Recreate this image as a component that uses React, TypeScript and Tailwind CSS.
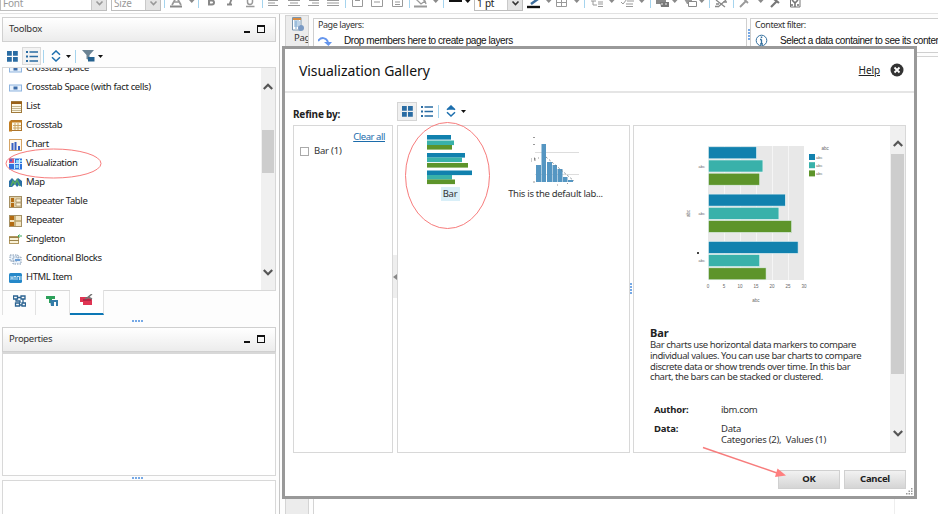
import type { ReactNode } from "react";

const UI = "font-['Noto_Sans',sans-serif]";

/* ---------- main toolbar ---------- */

function Cell({ w, children }: { w: number; children?: ReactNode }) {
  return (
    <svg width={w} height={13} viewBox={`0 0 ${w} 13`} className="block shrink-0" fill="none">
      {children}
    </svg>
  );
}
const Sep = ({ w }: { w: number }) => (
  <Cell w={w}>
    <path d="M.5 0V8" stroke="#a5d4ee" />
  </Cell>
);
const Caret = ({ w, dark = false }: { w: number; dark?: boolean }) => (
  <Cell w={w}>
    <path d="M0 0h5.500L2.750 3z" fill={dark ? "#111" : "#8a8a8a"} />
  </Cell>
);

function Combo({ text, w, dark = false, h = "h-[11px]" }: { text: string; w: string; dark?: boolean; h?: string }) {
  return (
    <div className={`flex shrink-0 overflow-hidden border border-t-0 border-[#bdbdbd] bg-white ${w} ${h}`}>
      <span className={`-mt-[3px] flex-1 pl-[2px] text-[10px] leading-[12px] tracking-[-0.2px] ${dark ? "text-[#222]" : "text-[#999]"}`}>{text}</span>
      <span className="flex w-[15px] justify-center border-l border-[#c9c9c9] bg-[#e4e4e4]">
        <svg width="9" height="8" viewBox="0 0 9 8" fill="none">
          <path d="M1.500 1.500 4.500 4.500 7.500 1.500" stroke={dark ? "#333" : "#999"} strokeWidth="1.600" />
        </svg>
      </span>
    </div>
  );
}

function TopBar() {
  const g = "#999";
  return (
    <div className="flex h-[14px] shrink-0 items-start overflow-hidden border-b border-[#e2e2e2] bg-white">
      <Combo text="Font" w="w-[107px]" />
      <div className="w-[4px]" />
      <Combo text="Size" w="w-[50px]" />
      <div className="w-[3px]" />
      <Sep w={6} />
      <Cell w={19}>
        <path d="M2 5 6.500-3 11 5M3.500 2h6" stroke={g} strokeWidth="1.700" />
        <path d="M0 6.500h12" stroke="#888" strokeWidth="2" />
      </Cell>
      <Caret w={9} />
      <Sep w={9} />
      <Cell w={20}>
        <path d="M1 4.500h4a1.500 1.500 0 0 0 0-4H2v4M2 0v-4" stroke="#888" strokeWidth="2" />
      </Cell>
      <Cell w={19}>
        <path d="M0 4.500h5M2.500 4.500 5-2" stroke="#888" strokeWidth="1.800" />
      </Cell>
      <Cell w={16}>
        <path d="M1.500-2v4a2.500 2.500 0 0 0 5 0v-4M0 6.500h8.500" stroke={g} strokeWidth="1.500" />
      </Cell>
      <Sep w={6} />
      <Cell w={20}><path d="M0 .5h10M0 3h7M0 5.500h10" stroke={g} /></Cell>
      <Cell w={19}><path d="M0 .5h12M2 3h8M0 5.500h12" stroke={g} /></Cell>
      <Cell w={20}><path d="M2 .5h10M5 3h7M1 5.500h11" stroke={g} /></Cell>
      <Cell w={18}><path d="M0 .5h12M0 3h12M0 5.500h12" stroke={g} /></Cell>
      <Sep w={7} />
      <Cell w={19}><path d="M.5-1v7.500h10V-1M3 .5h5" stroke={g} /></Cell>
      <Cell w={21}><path d="M.5-1v7.500h11V-1M3 2h6" stroke={g} /></Cell>
      <Cell w={17}><path d="M.5-1v7.500h10V-1M3 2h5M3 4.500h5" stroke={g} /></Cell>
      <Sep w={5} />
      <Cell w={19}>
        <path d="m3 0 4 4 4-3-4-3zM11 1l1 3" stroke={g} strokeWidth="1.300" />
        <path d="M0 6.500h13" stroke={g} strokeWidth="2" />
      </Cell>
      <Caret w={10} />
      <Sep w={6} />
      <Cell w={16}><path d="M0 1h13" stroke="#111" strokeWidth="2" /></Cell>
      <Caret w={9} dark />
      <Combo text="1 pt" w="w-[49px]" dark />
      <div className="w-[4px]" />
      <Cell w={19}>
        <path d="M4 4 11-1" stroke="#3c6c9b" strokeWidth="2.500" />
        <path d="M0 7h13" stroke="#111" strokeWidth="2.400" />
      </Cell>
      <Caret w={10} />
      <Cell w={18}><path d="M.5-1v7.500h10V-1M5.500 0v6M0 2.500h11" stroke={g} /></Cell>
      <Caret w={10} />
      <Sep w={6} />
      <Cell w={19}><path d="M1 1h5M3 1v4h4M8 2h5M8 4h5M8 6.500h5" stroke={g} /></Cell>
      <Caret w={12} />
      <Cell w={18}><path d="m0 2 2 2 4-5M6 1h7M5 4h7M5 6.500h7" stroke={g} /></Cell>
      <Caret w={11} />
      <Sep w={6} />
      <Cell w={16}>
        <path d="M0 0h10v4H0z" fill="#888" />
        <path d="M4 2h9v5H5z" fill="#777" /><path d="M5 4h2M9 4h2" stroke="#eee" />
      </Cell>
      <Caret w={12} />
      <Cell w={15}>
        <path d="M0-1h8v5H3z" fill="#999" /><path d="M4.500 1.500h8v5h-8z" fill="#fff" stroke="#888" />
      </Cell>
      <Caret w={10} />
      <Sep w={6} />
      <Cell w={18}><path d="M1 0 10 7M11 0 3 7M1 4h3M8 2h4M0 6.500h3" stroke="#888" strokeWidth="1.300" /></Cell>
      <Sep w={6} />
      <Cell w={19}><path d="m1 7 6-6M5-1l4 4" stroke={g} strokeWidth="1.800" /></Cell>
      <Caret w={12} />
      <Cell w={20}><path d="m1 7 6-6M4-1l5 4" stroke="#777" strokeWidth="2.200" /></Cell>
      <Cell w={20}>
        <path d="M.5-1v8h9.500V-1z" stroke="#777" />
        <path d="m2 0 3 3 3-3M5 3v4M2 6V4M8 6V4" stroke="#777" strokeWidth="1.600" />
      </Cell>
    </div>
  );
}

/* ---------- shared pieces ---------- */

const Grid4 = () => (
  <svg width="11" height="11" viewBox="0 0 11 11" fill="#2a6ca3">
    <path d="M0 0h4.800v4.800H0zM6 0h4.800v4.800H6zM0 6h4.800v4.800H0zM6 6h4.800v4.800H6z" />
  </svg>
);
const ListIcon = () => (
  <svg width="12" height="11" viewBox="0 0 12 11" stroke="#2a6ca3">
    <path d="M0 1h2M0 5.500h2M0 10h2" strokeWidth="2" />
    <path d="M3.500 1H12M3.500 5.500H12M3.500 10H12" strokeWidth="1.400" />
  </svg>
);
const SortIcon = ({ solid = false }: { solid?: boolean }) => (
  <svg width="10" height="12" viewBox="0 0 10 12" fill="none" stroke="#1d6fae" strokeWidth="1.500">
    <path d="M1 4.800 5 1l4 3.800" fill={solid ? "#1d6fae" : "none"} />
    <path d="M1 7.200 5 11l4-3.800" />
  </svg>
);
const Down = () => (
  <svg width="5" height="3" viewBox="0 0 5 3"><path d="M0 0h5L2.500 3z" fill="#111" /></svg>
);
const Chevron = ({ up = false }: { up?: boolean }) => (
  <svg width="10" height="7" viewBox="0 0 10 7" fill="none" stroke="#555" strokeWidth="2.200">
    <path d={up ? "M.8 6 5 1.800 9.200 6" : "M.8 1 5 5.200 9.200 1"} />
  </svg>
);
const Dots = () => (
  <div className="flex gap-[1px]">
    {[0, 1, 2, 3].map((i) => <i key={i} className="size-[2px] bg-[#76a9e6]" />)}
  </div>
);

function PanelHead({ title }: { title: string }) {
  return (
    <div className="flex h-[25px] shrink-0 items-center border border-[#d0d0d0] bg-gradient-to-b from-white to-[#ececec] pr-[10px] pl-[6px]">
      <span className="flex-1 text-[9.500px] tracking-[-0.300px] text-[#333]">{title}</span>
      <i className="mt-[5px] mr-[7px] h-[2px] w-[6px] bg-[#111]" />
      <i className="-mt-[1px] h-[8px] w-[8px] border border-t-2 border-[#111]" />
    </div>
  );
}

/* ---------- toolbox ---------- */

const ICONS: Record<string, ReactNode> = {
  space: <><rect x=".5" y="4" width="12" height="6" fill="#e9f2fc" stroke="#8eb4df" /><path d="M4.500 7h4" stroke="#3c6ca8" strokeWidth="3" /></>,
  list: <><rect x="2.500" y="1.500" width="10" height="11" fill="#fdf8e6" stroke="#a07a3c" /><path d="M2 2h11v2H2z" fill="#9a6118" /><path d="M3 6.500h9M3 8.500h9M3 10.500h9" stroke="#c5b791" /></>,
  crosstab: <><rect x="2.500" y="1.500" width="10" height="10" fill="#fdf8e6" stroke="#ad752c" /><path d="M1 1.500h12v2H3v9H0v-9z" fill="#c27d20" /><path d="M4 6.500h8M4 9h8M6 4v7M9 4v7" stroke="#caa465" /></>,
  chart: <><rect x=".5" y="1.500" width="12" height="11" fill="#fff8ee" stroke="#d5a465" /><path d="M3.500 5v7M6.500 4v8M10 8v4" stroke="#3860c2" strokeWidth="2" /></>,
  vis: <><path d="M0 1.500h13v11H0z" fill="#2f74dd" /><path d="M0 1.500h5V6H0z" fill="#d8567c" /><path d="M1 2.500h2v2H1z" fill="#3b62d6" /><path d="M7 3h3v3H7zM6.500 8h3v3h-3zM11 3h2v2h-2z" fill="#8fd4f7" /><path d="M5.500 2v10M0 6.500h13M10.500 2v10" stroke="#d5eaff" /></>,
  map: <><path d="M0 11V5l3-3 3 3 3-3 4 3v6l-3-2-2 2-2-3-3 3z" fill="#2a6fa5" /><path d="m2 10 2-5 2 3 2-4 3 6" stroke="#57aa62" strokeWidth="1.500" fill="none" /></>,
  reptable: <><rect x=".5" y="1.500" width="12" height="11" fill="#dfd0aa" stroke="#a59064" /><path d="M2 3h3v4H2zM2 8h3v4H2z" fill="#b36b12" /><path d="M7 4h5v3H7zM7 8h5v3H7z" fill="#fff5da" stroke="#937c50" strokeWidth=".6" /></>,
  repeater: <><rect x=".5" y="1.500" width="12" height="11" fill="#f2e5c3" stroke="#a59064" /><path d="M1 2h4v4H1zM1 8h4v4H1z" fill="#b36b12" /><path d="M6 2v10M6 7h6" stroke="#b9a36b" strokeWidth="1.500" /></>,
  single: <><rect x=".5" y="3.500" width="9" height="7" fill="#f9f1d7" stroke="#b29860" /><path d="M0 4.500h10M0 7.500h10" stroke="#9b8249" /><path d="M9 3h4M10.500 1.500 9 3l1.500 1.500" stroke="#3ca75c" fill="none" /></>,
  cond: <><path d="M1 3h8v6H1zM4 5h8v7H4z" fill="#e9f2fb" stroke="#8398b0" strokeDasharray="1.500 1" /><path d="M6 8h5" stroke="#6ca0d8" strokeWidth="2" /></>,
  html: <><rect y="2" width="13" height="10" rx="1.500" fill="#2588c9" /><path d="M2 5v4M4 5v4M2 7h2M6 5v4M5 5.500h2M8 9V5.500h2.500V9M12 5v4" stroke="#e6f5ff" strokeWidth=".8" fill="none" /></>,
};

const ITEMS: [string, string][] = [
  ["space", "Crosstab Space"],
  ["space", "Crosstab Space (with fact cells)"],
  ["list", "List"],
  ["crosstab", "Crosstab"],
  ["chart", "Chart"],
  ["vis", "Visualization"],
  ["map", "Map"],
  ["reptable", "Repeater Table"],
  ["repeater", "Repeater"],
  ["single", "Singleton"],
  ["cond", "Conditional Blocks"],
  ["html", "HTML Item"],
];

function Toolbox() {
  return (
    <aside className="flex w-[280px] shrink-0 flex-col border-r border-[#c6c6c6] pt-[3px] pr-[3px] pl-[2px]">
      <PanelHead title="Toolbox" />
      <div className="flex h-[25px] shrink-0 items-center pt-[3px] pl-[5px]">
        <Grid4 />
        <span className="ml-[4px] flex h-[18px] w-[19px] items-center justify-center border border-[#dadada] bg-[#f3f3f3]"><ListIcon /></span>
        <i className="ml-[2px] h-[13px] w-px bg-[#a5d4ee]" />
        <span className="ml-[7px]"><SortIcon /></span>
        <span className="ml-[5px]"><Down /></span>
        <i className="ml-[4px] h-[13px] w-px bg-[#a5d4ee]" />
        <svg className="ml-[6px]" width="13" height="12" viewBox="0 0 13 12">
          <path d="M0 0h12L7.500 5v5L4.500 9V5z" fill="#6a8293" /><path d="M6 7h6.500v4.500H6z" fill="#24618f" />
        </svg>
        <span className="ml-[3px]"><Down /></span>
      </div>
      <div className="flex h-[224px] shrink-0 overflow-hidden border border-[#d8d8d8] bg-white">
        <ul className="-mt-[9px] flex-1 pl-[6px]">
          {ITEMS.map(([icon, label]) => (
            <li key={label} className="flex h-[19px] items-center gap-[3px]">
              <svg width="14" height="14" viewBox="0 0 14 14">{ICONS[icon]}</svg>
              <span className="text-[9.500px] tracking-[-0.360px] whitespace-nowrap text-[#222]">{label}</span>
            </li>
          ))}
        </ul>
        <div className="flex w-[14px] flex-col items-center bg-[#f0f0f0] pt-[15px] pb-[14px]">
          <Chevron up />
          <i className="mt-[40px] h-[43px] w-[12px] bg-[#cdcdcd]" />
          <span className="mt-auto flex"><Chevron /></span>
        </div>
      </div>
      <div className="flex h-[24px] shrink-0">
        <span className="flex w-[34px] items-center justify-center border-r border-l border-[#e2e2e2] pb-[4px]">
          <svg width="13" height="12" viewBox="0 0 13 12" fill="none" stroke="#2b6391">
            <path d="M.5 1h4v3h-4zM8 1h4v3H8zM2.500 8h4v3h-4zM9 8h3.500v3H9zM4 2.500h4M3 4v2h4v2M10 4v4M6.500 10H9" strokeWidth="1.300" />
          </svg>
        </span>
        <span className="flex w-[34px] items-center justify-center border-r border-[#e2e2e2] pb-[4px]">
          <svg width="13" height="12" viewBox="0 0 13 12">
            <path d="M0 1h9v3H6v4H3V4H0z" fill="#2ca05a" /><path d="M4 5h8v6h-2V7H8v4H5z" fill="#347ba8" />
          </svg>
        </span>
        <span className="-mt-px flex w-[34px] items-center justify-center border-r border-b-2 border-r-[#e2e2e2] border-b-[#0c77b5] bg-white pb-[3px]">
          <svg width="14" height="12" viewBox="0 0 14 12">
            <path d="M0 3h8l4 2v6H3V8H0z" fill="#df3553" /><path d="m5 5 2-1 5-4M8 3l4 2" stroke="#777" strokeWidth="1.500" /><path d="M3 6h8" stroke="#8e1838" />
          </svg>
        </span>
      </div>
      <div className="flex h-[12px] shrink-0 items-center justify-center pr-[3px]"><Dots /></div>
      <PanelHead title="Properties" />
      <div className="h-[124px] shrink-0 border border-t-2 border-[#d8d8d8] bg-white" />
      <div className="flex h-[4px] shrink-0 items-center justify-center pr-[3px]"><Dots /></div>
      <div className="flex-1 border border-b-0 border-[#d8d8d8] bg-white" />
    </aside>
  );
}

/* ---------- page behind the dialog ---------- */

function Workspace() {
  const head = "text-[9px] leading-[11px] tracking-[-0.440px] text-[#333]";
  const note = "ml-[12px] font-['Liberation_Sans',sans-serif] text-[10px] leading-[12px] tracking-[-0.420px] whitespace-nowrap text-[#111]";
  return (
    <main className="flex min-w-0 flex-1 pt-px pl-[5px]">
      <div className="h-full w-[24px] shrink-0 overflow-hidden border border-b-0 border-[#d4d4d4] bg-[#ececec] pt-px pl-[6px]">
        <svg width="13" height="15" viewBox="0 0 13 15">
          <path d="M.5.500H9V13H.5z" fill="#fff" stroke="#7995ae" /><path d="M2 3h5M2 5h6M2 7h6M2 9h5M4 4v8" stroke="#7aa7cf" /><path d="M1 1h8v2H1z" fill="#d98c42" /><circle cx="9" cy="11" r="3" fill="#7a9ac4" />
        </svg>
        <div className="-mt-px ml-[2px] text-[9.500px] leading-[13px] tracking-[-0.300px] whitespace-nowrap text-[#333]">Page</div>
      </div>
      <div className="ml-[4px] flex min-w-0 flex-1 flex-col pt-[3px]">
        <div className="flex h-[35px] shrink-0">
          <section className="w-[434px] shrink-0 border border-[#cfcfcf] bg-white pl-[4px]">
            <div className={head}>Page layers:</div>
            <div className="mt-[5px] flex items-center">
              <svg className="shrink-0" width="14" height="11" viewBox="0 0 14 11" fill="none"><path d="M0 5C3 1 8 1 10 6" stroke="#6495ed" strokeWidth="2" /><path d="M6 6h8l-3.500 4z" fill="#6495ed" /></svg>
              <span className={note}>Drop members here to create page layers</span>
            </div>
          </section>
          <div className="flex w-[3px] flex-col items-center gap-px pt-[11px]">
            {[0, 1, 2, 3].map((i) => <i key={i} className="size-[2px] shrink-0 bg-[#76a9e6]" />)}
          </div>
          <section className="min-w-0 flex-1 overflow-hidden border border-r-0 border-[#cfcfcf] bg-white pl-[4px]">
            <div className={head}>Context filter:</div>
            <div className="mt-[4px] flex items-center">
              <svg className="shrink-0" width="13" height="13" viewBox="0 0 13 13" fill="none" stroke="#35709f"><circle cx="6.500" cy="6.500" r="5.300" /><path d="M6.500 5.500V10M5 10h3M5 5.500h1.500" strokeWidth="1.300" /><path d="M6.500 2.500v1.500" strokeWidth="1.500" /></svg>
              <span className={note}>Select a data container to see its contents</span>
            </div>
          </section>
        </div>
        <div className="mt-[3px] flex flex-1 border-t border-l border-[#d4d4d4] bg-white">
          <div className="w-[581px] border-r border-[#eee]" />
        </div>
      </div>
    </main>
  );
}

/* ---------- dialog ---------- */

const GROUPS = [
  [15, 17, 16],
  [24, 22, 26],
  [28, 16, 18],
];
const FILLS = ["#1181ae", "#39b1aa", "#5d942a"];

function BarPreview() {
  return (
    <svg width="160" height="165" viewBox="0 0 160 165" fontFamily="Liberation Sans, sans-serif" fontSize="4.500" fill="#666">
      <rect x="28" y="6" width="96" height="134" fill="#e8e8e8" />
      <path d="M44.500 6v134M60.500 6v134M76.500 6v134M92.500 6v134M108.500 6v134" stroke="#fafafa" strokeWidth=".7" />
      {GROUPS.map((g, i) =>
        g.map((v, j) => (
          <rect key={`${i}${j}`} x="28.500" y={6.800 + i * 47.300 + j * 13.200} width={v * 3.200} height="12" fill={FILLS[j]} stroke="#e5f3f3" strokeWidth=".6" />
        )),
      )}
      {[0, 5, 10, 15, 20, 25, 30].map((n) => <text key={n} x={28 + n * 3.200} y="147.500" textAnchor="middle">{n}</text>)}
      {[28, 75, 122].map((y) => <text key={y} x="18.500" y={y} fontSize="4">abc</text>)}
      <text x="76" y="162" textAnchor="middle">abc</text>
      <text transform="translate(9.500 77) rotate(-90)">abc</text>
      <path d="M17 113h2" stroke="#444" strokeWidth="2" />
      <text x="141.500" y="10">abc</text>
      {FILLS.map((c, i) => (
        <g key={c}>
          <rect x="129" y={14 + i * 8.200} width="6" height="6" fill={c} />
          <text x="136" y={19 + i * 8.200} fontSize="4">abc</text>
        </g>
      ))}
    </svg>
  );
}

const THUMB = [24, 27, 25, 38, 35, 41, 45, 25, 28];
const THUMB_Y = [0, 5.500, 10, 18, 22.500, 28, 35.500, 40, 44.500];

function Gallery() {
  return (
    <div className="flex w-[233px] shrink-0 border border-[#d8d8d8] pt-[9px]">
      <div className="flex w-[104px] flex-col items-center">
        <svg width="46" height="50" viewBox="0 0 46 50">
          {THUMB.map((w, i) => <rect key={i} x="0" y={THUMB_Y[i]} width={w} height="4.600" fill={FILLS[i % 3]} />)}
        </svg>
        <span className="mt-[2px] flex h-[14px] w-[19px] items-center justify-center bg-[#d9eff8] text-[9.500px] tracking-[-0.300px] text-[#333]">Bar</span>
      </div>
      <div className="flex w-[107px] flex-col items-center">
        <svg width="50" height="52" viewBox="0 0 50 52">
          <path d="M4 17.500h44M4 39.500h44" stroke="#ddd" />
          <path d="M5 30h5v17H5zM10.500 9H15v38h-4.500zM16 27h5v20h-5zM21.500 30h4.500v17h-4.500zM26.500 34h5v13h-5zM32 42h4.500v5H32zM37 45h5v2h-5z" fill="#5596c2" />
          <path d="M15 22 43 46" stroke="#6a7780" strokeWidth=".8" strokeDasharray="2 2" />
          <path d="M2 2.500h2M2 9.500h2M0 23v4M3 23h1v3M7 23h1M26 50h1M36 48.500h1M2 47h2" stroke="#999" />
        </svg>
        <span className="text-[9.500px] leading-[14px] tracking-[-0.300px] whitespace-nowrap text-[#333]">This is the default lab...</span>
      </div>
    </div>
  );
}

function Dialog() {
  const btn = "flex h-[19px] w-[62px] items-center justify-center border border-[#d0d0d0] bg-gradient-to-b from-[#f2f2f2] to-[#d5d5d5] text-[9.500px] tracking-[-0.250px] font-bold text-[#222]";
  return (
    <div className="absolute top-[46px] left-[282px] flex h-[453px] w-[635px] flex-col border-[3px] border-[#999] bg-white">
      <header className="flex h-[44px] shrink-0 items-center border-b-2 border-[#e5e5e5] pr-[10px] pl-[14px]">
        <h1 className="flex-1 text-[14px] tracking-[-0.080px] text-[#111]">Visualization Gallery</h1>
        <a className="mr-[10px] text-[10px] tracking-[-0.100px] text-[#222] underline">Help</a>
        <svg width="14" height="14" viewBox="0 0 14 14"><circle cx="7" cy="7" r="6.500" fill="#333" /><path d="m4.500 4.500 5 5m0-5-5 5" stroke="#fff" strokeWidth="1.800" /></svg>
      </header>
      <div className="flex h-[32px] shrink-0 items-center pl-[8px]">
        <b className="mt-[11px] w-[104px] text-[10px] tracking-[-0.200px] text-[#222]">Refine by:</b>
        <span className="mt-[4px] flex h-[19px] w-[20px] items-center justify-center border border-[#d5d5d5] bg-[#f0f0f0]"><Grid4 /></span>
        <div className="mt-[4px] flex items-center">
          <span className="ml-[4px]"><ListIcon /></span>
          <i className="ml-[5px] h-[13px] w-px bg-[#a5d4ee]" />
          <span className="ml-[7px]"><SortIcon solid /></span>
          <span className="ml-[5px]"><Down /></span>
        </div>
      </div>
      <div className="flex h-[328px] shrink-0 pl-[8px]">
        <div className="w-[100px] shrink-0 border border-[#d8d8d8] pt-[4px] pr-[7px] pl-[6px]">
          <a className="block text-right text-[9.500px] leading-[13px] tracking-[-0.440px] text-[#1c6cab] underline">Clear all</a>
          <label className="mt-[1px] flex items-center gap-[5px] text-[9.500px] leading-[14px] tracking-[-0.200px] text-[#333]">
            <i className="size-[9px] border border-[#aaa] bg-white" />Bar (1)
          </label>
        </div>
        <div className="w-[4px] shrink-0 pt-[130px]">
          <div className="flex h-[43px] items-center bg-[#eee]"><svg width="4" height="6" viewBox="0 0 4 6"><path d="M4 0v6L0 3z" fill="#888" /></svg></div>
        </div>
        <Gallery />
        <div className="flex w-[3px] shrink-0 flex-col items-center gap-px pt-[158px] -ml-px mr-px">
          {[0, 1, 2, 3].map((i) => <i key={i} className="size-[2px] bg-[#76a9e6]" />)}
        </div>
        <div className="flex w-[273px] shrink-0 border border-[#d8d8d8]">
          <div className="min-w-0 flex-1 pl-[16px] text-[9.500px] leading-[11px] tracking-[-0.360px] text-[#333]">
            <div className="h-[200px] pt-[14px] pl-[30px] tracking-normal"><BarPreview /></div>
            <h2 className="text-[11px] leading-[14px] font-bold tracking-[-0.100px] text-[#222]">Bar</h2>
            <p className="leading-[10.800px] tracking-[-0.430px] whitespace-nowrap">
              Bar charts use horizontal data markers to compare<br />
              individual values. You can use bar charts to compare<br />
              discrete data or show trends over time. In this bar<br />
              chart, the bars can be stacked or clustered.
            </p>
            <dl className="mt-[21px] grid grid-cols-[67px_1fr] gap-y-[8px] pl-[4px]">
              <dt className="font-bold tracking-[-0.200px] text-[#222]">Author:</dt>
              <dd>ibm.com</dd>
              <dt className="font-bold tracking-[-0.200px] text-[#222]">Data:</dt>
              <dd className="tracking-[-0.250px]">Data<br />Categories (2),&nbsp; Values (1)</dd>
            </dl>
          </div>
          <div className="flex w-[15px] flex-col items-center bg-[#f0f0f0] pt-[14px] pb-[15px]">
            <Chevron up />
            <i className="mt-[7px] h-[220px] w-[13px] bg-[#cdcdcd]" />
            <span className="mt-auto flex"><Chevron /></span>
          </div>
        </div>
      </div>
      <footer className="flex flex-1 justify-end gap-[4px] pt-[17px] pr-[8px]">
        <button className={btn}>OK</button>
        <button className={btn}>Cancel</button>
      </footer>
      <svg className="absolute right-[1px] bottom-[1px]" width="7" height="7" viewBox="0 0 7 7" fill="#999">
        <path d="M5 0h1.500v1.500H5zM2.500 2.500H4V4H2.500zM5 2.500h1.500V4H5zM0 5h1.500v1.500H0zM2.500 5H4v1.500H2.500zM5 5h1.500v1.500H5z" />
      </svg>
    </div>
  );
}

export default function App() {
  return (
    <div className={`relative flex h-[514px] w-[938px] flex-col overflow-hidden bg-[#fdfdfd] ${UI}`}>
      <TopBar />
      <div className="flex min-h-0 flex-1">
        <Toolbox />
        <Workspace />
      </div>
      <Dialog />
      {/* callout marks over the window */}
      <svg className="pointer-events-none absolute inset-0" width="938" height="514" viewBox="0 0 938 514" fill="none" stroke="#f77c7c">
        <ellipse cx="53.500" cy="163.500" rx="47.500" ry="14.500" />
        <ellipse cx="447.500" cy="175.500" rx="42" ry="53" />
        <path d="M703 447.500 777 473" strokeWidth="1.400" />
        <path d="m786 475.500-8.500-7-2.500 8.500z" fill="#ff7f7f" stroke="none" />
      </svg>
    </div>
  );
}
